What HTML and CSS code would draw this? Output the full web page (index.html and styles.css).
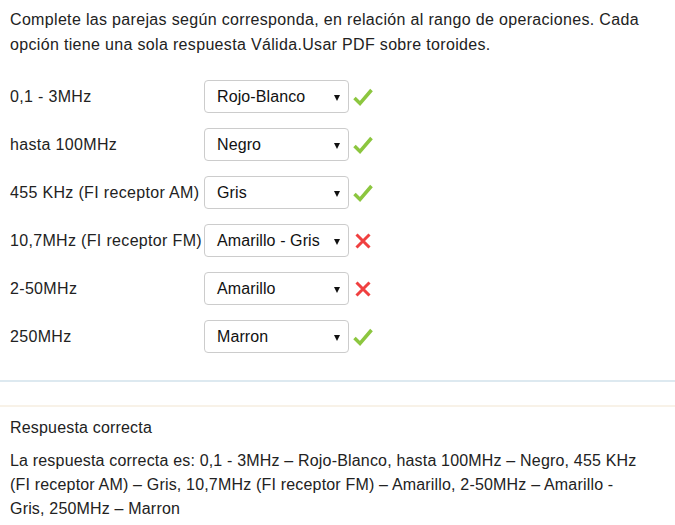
FILE: index.html
```html
<!DOCTYPE html>
<html lang="es">
<head>
<meta charset="utf-8">
<link rel="stylesheet" href="styles.css">
</head>
<body>
<div class="question">
  <p class="intro">Complete las parejas según corresponda, en relación al rango de operaciones. Cada opción tiene una sola respuesta Válida.Usar PDF sobre toroides.</p>
  <div class="rows">
    <div class="row"><span class="label">0,1 - 3MHz</span><span class="select">Rojo-Blanco<span class="arrow"></span></span><svg class="icon ok" viewBox="0 0 20 20"><path d="M1.5 11 L7 16.5 L18.5 3" /></svg></div>
    <div class="row"><span class="label">hasta 100MHz</span><span class="select">Negro<span class="arrow"></span></span><svg class="icon ok" viewBox="0 0 20 20"><path d="M1.5 11 L7 16.5 L18.5 3" /></svg></div>
    <div class="row"><span class="label">455 KHz (FI receptor AM)</span><span class="select">Gris<span class="arrow"></span></span><svg class="icon ok" viewBox="0 0 20 20"><path d="M1.5 11 L7 16.5 L18.5 3" /></svg></div>
    <div class="row"><span class="label">10,7MHz (FI receptor FM)</span><span class="select">Amarillo - Gris<span class="arrow"></span></span><svg class="icon bad" viewBox="0 0 20 20"><path d="M3.5 3.5 L16.5 16.5 M16.5 3.5 L3.5 16.5" /></svg></div>
    <div class="row"><span class="label">2-50MHz</span><span class="select">Amarillo<span class="arrow"></span></span><svg class="icon bad" viewBox="0 0 20 20"><path d="M3.5 3.5 L16.5 16.5 M16.5 3.5 L3.5 16.5" /></svg></div>
    <div class="row"><span class="label">250MHz</span><span class="select">Marron<span class="arrow"></span></span><svg class="icon ok" viewBox="0 0 20 20"><path d="M1.5 11 L7 16.5 L18.5 3" /></svg></div>
  </div>
</div>
<div class="feedback">
  <p class="fb-title">Respuesta correcta</p>
  <p class="fb-text">La respuesta correcta es: 0,1 - 3MHz – Rojo-Blanco, hasta 100MHz – Negro, 455 KHz (FI receptor AM) – Gris, 10,7MHz (FI receptor FM) – Amarillo, 2-50MHz – Amarillo - Gris, 250MHz – Marron</p>
</div>
</body>
</html>
```
FILE: styles.css
```css
html, body {
  margin: 0;
  padding: 0;
  background: #fff;
}
body {
  font-family: "Liberation Sans", Arial, sans-serif;
  font-size: 16px;
  letter-spacing: 0.33px;
  color: #222;
}
.question {
  padding: 7px 10px 0 10px;
  border-bottom: 2px solid #dde9f0;
  height: 382px;
  box-sizing: border-box;
}
.intro {
  margin: 0;
  line-height: 25px;
}
.rows {
  margin-top: 23px;
  display: flex;
  flex-direction: column;
  gap: 15px;
}
.row {
  display: flex;
  align-items: center;
  height: 33px;
}
.label {
  width: 194px;
  white-space: nowrap;
}
.select {
  position: relative;
  box-sizing: border-box;
  width: 145px;
  height: 33px;
  border: 1px solid #ccc;
  border-radius: 4px;
  padding: 0 0 0 12px;
  display: flex;
  align-items: center;
  color: #111;
  letter-spacing: 0.1px;
}
.arrow {
  position: absolute;
  right: 8px;
  top: 14px;
  border-left: 3.5px solid transparent;
  border-right: 3.5px solid transparent;
  border-top: 6px solid #111;
}
.icon {
  width: 20px;
  height: 20px;
  margin-left: 4px;
  fill: none;
}
.icon.ok path {
  stroke: #8cc63f;
  stroke-width: 3.5;
}
.icon.bad path {
  stroke: #f04040;
  stroke-width: 3;
}
.feedback {
  margin-top: 23px;
  border-top: 2px solid #f8f2e8;
  padding: 10px 25px 0 10px;
  letter-spacing: 0.18px;
}
.fb-title {
  margin: 0;
  line-height: 22px;
}
.fb-text {
  margin: 10px 0 0 0;
  line-height: 24px;
}
```
